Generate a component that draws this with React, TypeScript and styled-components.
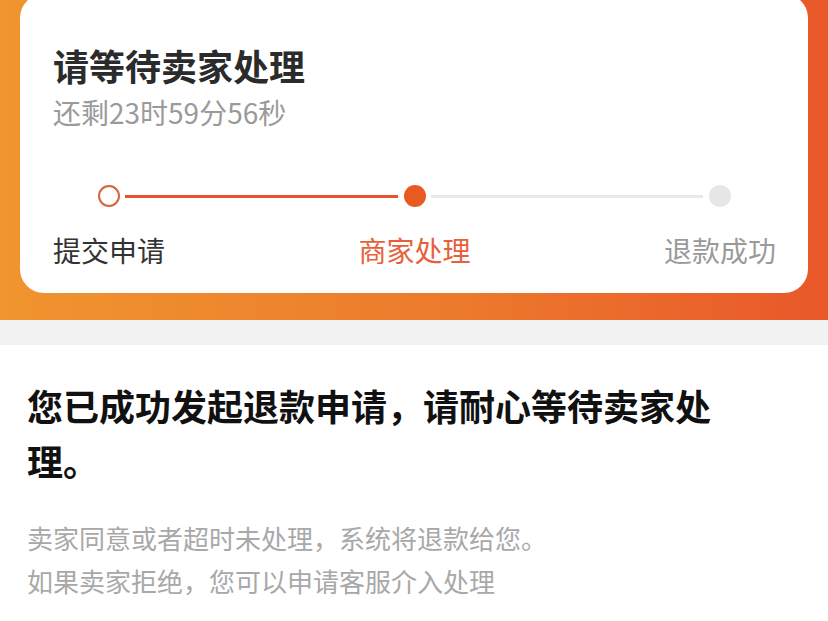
import styled, { createGlobalStyle } from 'styled-components';

const GlobalStyle = createGlobalStyle`
  html, body {
    margin: 0;
    padding: 0;
    background: #ffffff;
    font-family: "Noto Sans CJK SC", "Noto Sans", sans-serif;
  }
`;

type StepState = 'done' | 'active' | 'todo';

const steps: { label: string; state: StepState }[] = [
  { label: '提交申请', state: 'done' },
  { label: '商家处理', state: 'active' },
  { label: '退款成功', state: 'todo' },
];

export default function App() {
  return (
    <Page>
      <GlobalStyle />
      <Header>
        <Card>
          <Title>请等待卖家处理</Title>
          <Countdown>还剩23时59分56秒</Countdown>
          <Steps>
            {steps.map((s, i) => (
              <StepGroup key={s.label}>
                {i > 0 && <Connector $on={s.state !== 'todo'} />}
                <Step>
                  <Dot $state={s.state} />
                  <StepLabel $state={s.state}>{s.label}</StepLabel>
                </Step>
              </StepGroup>
            ))}
          </Steps>
        </Card>
      </Header>
      <Divider />
      <Notice>
        <NoticeTitle>您已成功发起退款申请，请耐心等待卖家处理。</NoticeTitle>
        <NoticeText>
          卖家同意或者超时未处理，系统将退款给您。
          <br />
          如果卖家拒绝，您可以申请客服介入处理
        </NoticeText>
      </Notice>
    </Page>
  );
}

const Page = styled.div`
  width: 828px;
  min-height: 621px;
  overflow: hidden;
  background: #fff;
`;

const Header = styled.div`
  display: flex;
  flex-direction: column;
  padding: 0 20px 27px;
  background: linear-gradient(90deg, #f0952f 0%, #ec7a2c 55%, #e9582a 100%);
`;

const Card = styled.div`
  margin-top: -6px;
  background: #fff;
  border-radius: 24px;
  padding: 49px 32px 25px 33px;
`;

const Title = styled.div`
  font-size: 36px;
  line-height: 44px;
  font-weight: 700;
  color: #2b2b2b;
`;

const Countdown = styled.div`
  margin-top: 8px;
  font-size: 28px;
  line-height: 34px;
  color: #9a9a9a;
`;

const Steps = styled.div`
  display: flex;
  align-items: flex-start;
  margin-top: 56px;
`;

const StepGroup = styled.div`
  display: flex;
  align-items: flex-start;
  &:not(:first-child) {
    flex: 1;
  }
`;

const Connector = styled.div<{ $on: boolean }>`
  flex: 1;
  height: 3px;
  margin: 10px -39px 0 -40px;
  background: ${(p) => (p.$on ? '#e8512f' : '#e8e8e8')};
`;

const Step = styled.div`
  display: flex;
  flex-direction: column;
  align-items: center;
  gap: 25px;
`;

const Dot = styled.div<{ $state: StepState }>`
  box-sizing: border-box;
  width: 22px;
  height: 22px;
  border-radius: 50%;
  background: ${(p) =>
    p.$state === 'done' ? '#fff' : p.$state === 'active' ? '#e95a22' : '#e6e6e6'};
  border: ${(p) => (p.$state === 'done' ? '2px solid #d9643a' : 'none')};
`;

const StepLabel = styled.div<{ $state: StepState }>`
  font-size: 28px;
  line-height: 36px;
  white-space: nowrap;
  color: ${(p) =>
    p.$state === 'done' ? '#333' : p.$state === 'active' ? '#e8603a' : '#9a9a9a'};
`;

const Divider = styled.div`
  height: 25px;
  background: #f2f2f2;
`;

const Notice = styled.div`
  padding: 33px 100px 0 27px;
`;

const NoticeTitle = styled.div`
  font-size: 36px;
  line-height: 55px;
  font-weight: 700;
  color: #111;
`;

const NoticeText = styled.div`
  margin-top: 28px;
  font-size: 26px;
  line-height: 43px;
  color: #a8a8a8;
`;
